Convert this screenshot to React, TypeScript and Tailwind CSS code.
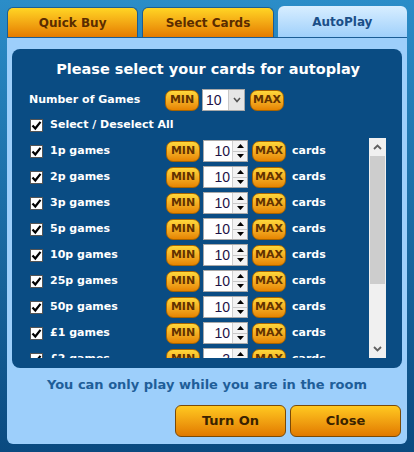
import React from 'react';

const rows = [
  { label: '1p games', value: '10' },
  { label: '2p games', value: '10' },
  { label: '3p games', value: '10' },
  { label: '5p games', value: '10' },
  { label: '10p games', value: '10' },
  { label: '25p games', value: '10' },
  { label: '50p games', value: '10' },
  { label: '£1 games', value: '10' },
  { label: '£2 games', value: '2' },
];

function Check() {
  return (
    <span className="w-[13px] h-[13px] bg-white border border-[#555] flex items-center justify-center shrink-0">
      <svg width="11" height="11" viewBox="0 0 11 11">
        <path d="M1.5 5.5 L4.3 8.5 L9.5 1.8" stroke="#000" strokeWidth="2.2" fill="none" />
      </svg>
    </span>
  );
}

function SmallBtn({ text }: { text: string }) {
  return (
    <span className="w-[34px] h-[21px] rounded-[7px] border border-[#a86400] bg-gradient-to-b from-[#ffd83a] to-[#e68400] flex items-center justify-center text-[11px] font-bold text-[#623200] shrink-0">
      {text}
    </span>
  );
}

function Spinner({ value }: { value: string }) {
  return (
    <span className="w-[45px] h-[22px] bg-white border border-[#a9a9a9] flex items-stretch shrink-0">
      <span className="flex-1 flex items-center justify-end pr-[2px] text-[14px] text-[#1d1246] font-['Liberation_Sans',sans-serif]">
        {value}
      </span>
      <span className="w-[15px] flex flex-col border-l border-[#d0d0d0]">
        <span className="flex-1 flex items-center justify-center border-b border-[#c8c8c8] bg-[#f3f3f3]">
          <svg width="7" height="4" viewBox="0 0 7 4"><path d="M3.5 0 L7 4 L0 4 Z" fill="#000" /></svg>
        </span>
        <span className="flex-1 flex items-center justify-center bg-[#f3f3f3]">
          <svg width="7" height="4" viewBox="0 0 7 4"><path d="M0 0 L7 0 L3.5 4 Z" fill="#000" /></svg>
        </span>
      </span>
    </span>
  );
}

function Row({ label, value }: { label: string; value: string }) {
  return (
    <div className="h-[26px] flex items-center shrink-0">
      <Check />
      <span className="ml-[7px] w-[116px] text-[11px] font-bold text-white">{label}</span>
      <SmallBtn text="MIN" />
      <span className="ml-[3px]"><Spinner value={value} /></span>
      <span className="ml-[4px]"><SmallBtn text="MAX" /></span>
      <span className="ml-[6px] text-[11px] font-bold text-white">cards</span>
    </div>
  );
}

export default function App() {
  return (
    <div className="w-[414px] h-[452px] bg-gradient-to-b from-[#2b8dc8] to-[#0a4a80] px-[7px] pt-[6px] pb-[8px] flex flex-col font-['DejaVu_Sans',sans-serif]">
      {/* tabs */}
      <div className="flex gap-[4px] h-[31px] items-end">
        <div className="flex-1 h-[30px] rounded-t-[6px] border border-b-0 border-[#1b5d95] bg-gradient-to-b from-[#ffd524] to-[#e47b00] flex items-center justify-center text-[12px] font-bold text-[#5a2c00]">
          Quick Buy
        </div>
        <div className="flex-1 h-[30px] rounded-t-[6px] border border-b-0 border-[#1b5d95] bg-gradient-to-b from-[#ffd524] to-[#e47b00] flex items-center justify-center text-[12px] font-bold text-[#5a2c00]">
          Select Cards
        </div>
        <div className="flex-1 h-[31px] rounded-t-[6px] bg-gradient-to-b from-[#d8eeff] to-[#9fd0fb] flex items-center justify-center text-[12px] font-bold text-[#1b4f88]">
          AutoPlay
        </div>
      </div>

      {/* body */}
      <div className="flex-1 bg-[#9dcffb] rounded-b-[6px] border-t border-[#1b5d95] px-[5px] pt-[11px] flex flex-col">
        <div className="h-[319px] bg-[#0a4c83] rounded-[8px] flex flex-col pl-[18px] pr-[16px]">
          <div className="h-[38px] pt-[10px] text-center text-[14.5px] font-bold text-white">
            Please select your cards for autoplay
          </div>
          <div className="h-[26px] flex items-center">
            <span className="w-[136px] -ml-[1px] text-[11px] font-bold text-white">Number of Games</span>
            <SmallBtn text="MIN" />
            <span className="ml-[3px] w-[43px] h-[22px] bg-white border border-[#a9a9a9] flex items-stretch">
              <span className="flex-1 flex items-center pl-[3px] text-[14px] text-[#1d1246] font-['Liberation_Sans',sans-serif]">10</span>
              <span className="w-[16px] bg-[#e6e6e6] border-l border-[#c8c8c8] flex items-center justify-center">
                <svg width="8" height="6" viewBox="0 0 8 6"><path d="M1 1 L4 4.5 L7 1" stroke="#555" strokeWidth="1.6" fill="none" /></svg>
              </span>
            </span>
            <span className="ml-[5px]"><SmallBtn text="MAX" /></span>
          </div>
          <div className="h-[25px] flex items-center">
            <Check />
            <span className="ml-[7px] text-[11px] font-bold text-white">Select / Deselect All</span>
          </div>
          <div className="h-[220px] flex">
            <div className="flex-1 overflow-hidden flex flex-col">
              {rows.map((r) => (
                <Row key={r.label} label={r.label} value={r.value} />
              ))}
            </div>
            <div className="w-[17px] bg-[#f0f0f0] flex flex-col">
              <div className="h-[18px] flex items-center justify-center">
                <svg width="9" height="6" viewBox="0 0 9 6"><path d="M1 5 L4.5 1.5 L8 5" stroke="#606060" strokeWidth="1.8" fill="none" /></svg>
              </div>
              <div className="h-[128px] mx-[1px] bg-[#cdcdcd]" />
              <div className="flex-1" />
              <div className="h-[18px] flex items-center justify-center">
                <svg width="9" height="6" viewBox="0 0 9 6"><path d="M1 1 L4.5 4.5 L8 1" stroke="#606060" strokeWidth="1.8" fill="none" /></svg>
              </div>
            </div>
          </div>
        </div>
        <div className="h-[33px] flex items-center justify-center text-[13px] font-bold text-[#1f5e99]">
          You can only play while you are in the room
        </div>
        <div className="flex justify-end gap-[4px] pr-[1px] pt-[4px]">
          <button className="w-[111px] h-[32px] rounded-[6px] border border-[#7a4a08] bg-gradient-to-b from-[#ffc920] to-[#e17900] text-[13px] font-bold text-[#3a2200]">
            Turn On
          </button>
          <button className="w-[111px] h-[32px] rounded-[6px] border border-[#7a4a08] bg-gradient-to-b from-[#ffc920] to-[#e17900] text-[13px] font-bold text-[#3a2200]">
            Close
          </button>
        </div>
      </div>
    </div>
  );
}
